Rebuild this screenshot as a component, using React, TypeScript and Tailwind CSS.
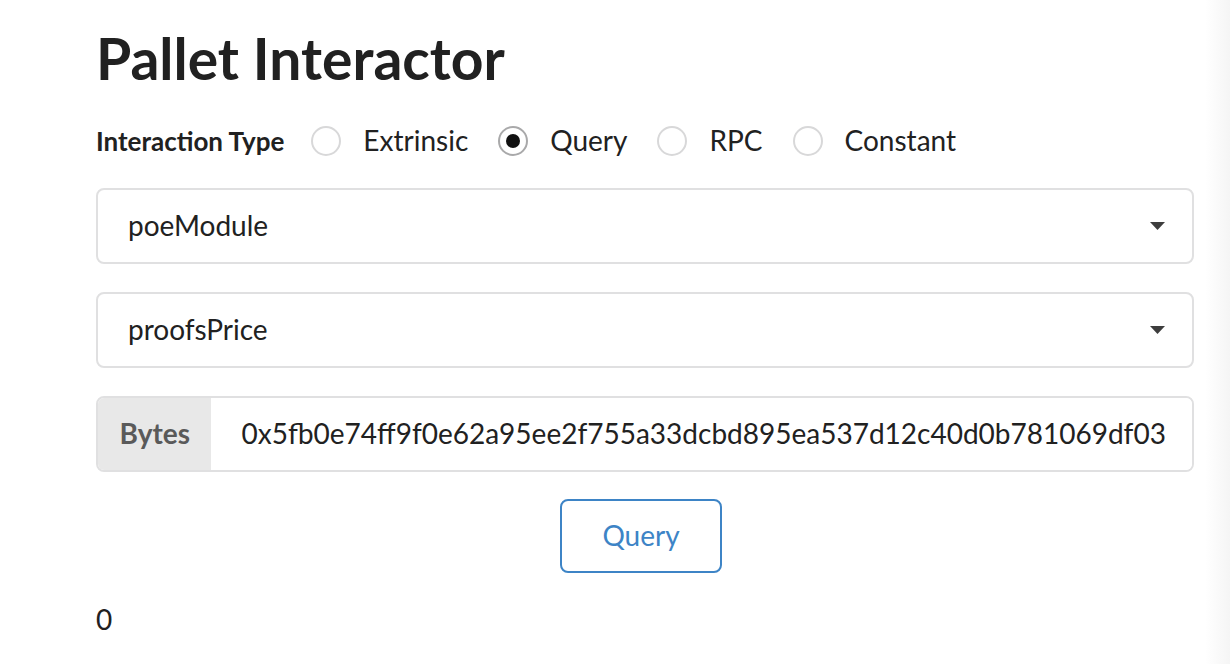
import { useState } from "react";

const OPTIONS = ["Extrinsic", "Query", "RPC", "Constant"];

function Radio({ label, checked, onClick }: { label: string; checked: boolean; onClick: () => void }) {
  return (
    <button type="button" onClick={onClick} className="mr-[30px] flex items-center gap-[22px]">
      <span
        className={
          "flex h-[30px] w-[30px] items-center justify-center rounded-full border-2 bg-white " +
          (checked ? "border-[#a9a9aa]" : "border-[#d8d8d9]")
        }
      >
        {checked ? <span className="h-[14px] w-[14px] rounded-full bg-[#111]" /> : null}
      </span>
      <span className="text-[28px] leading-[1.2] text-[#212121]">{label}</span>
    </button>
  );
}

function Dropdown({ value }: { value: string }) {
  return (
    <div className="flex h-[76px] items-center justify-between rounded-[8px] border-2 border-[#e0e0e1] bg-white pl-[30px] pr-[27px]">
      <span className="text-[28px] leading-[1.2] text-[#212121]">{value}</span>
      <svg width="15" height="8" viewBox="0 0 15 8" className="mt-[1px]">
        <polygon points="0,0 15,0 7.5,8" fill="#3d3d3d" />
      </svg>
    </div>
  );
}

export default function App() {
  const [type, setType] = useState("Query");

  return (
    <div className="flex h-[664px] w-full overflow-hidden bg-white font-['Lato','Liberation_Sans',sans-serif] text-[#212121]">
      <main className="w-[1205px] shrink-0 pl-[96px] pr-[11px] pt-[24px]">
        <h1 className="text-[57px] font-bold leading-[1.2] text-[#212121]">Pallet Interactor</h1>

        <div className="mt-[32px] flex items-center">
          <span className="mr-[27px] text-[26px] font-bold leading-[1.2] text-[#212121]">Interaction Type</span>
          {OPTIONS.map((o) => (
            <Radio key={o} label={o} checked={type === o} onClick={() => setType(o)} />
          ))}
        </div>

        <div className="mt-[30px] flex flex-col gap-[28px]">
          <Dropdown value="poeModule" />
          <Dropdown value="proofsPrice" />
          <div className="flex h-[76px] overflow-hidden rounded-[8px] border-2 border-[#e0e0e1]">
            <div className="flex items-center bg-[#e8e8e8] px-[21.5px] text-[28px] font-bold leading-[1.2] text-[#5a5a5a]">
              Bytes
            </div>
            <div className="flex flex-1 items-center bg-white pl-[30px] text-[28px] leading-[1.2] text-[#212121]">
              0x5fb0e74ff9f0e62a95ee2f755a33dcbd895ea537d12c40d0b781069df03
            </div>
          </div>
        </div>

        <div className="mt-[27px] flex justify-center pr-[8px]">
          <button
            type="button"
            className="h-[74px] w-[162px] rounded-[8px] border-2 border-[#3d84c6] bg-white text-[28px] leading-[1.2] text-[#3d84c6]"
          >
            Query
          </button>
        </div>

        <div className="mt-[30px] text-[28px] leading-[1.2] text-[#212121]">0</div>
      </main>
      <div className="flex-1 bg-linear-to-r from-white to-[#f5f5f5]" />
    </div>
  );
}
